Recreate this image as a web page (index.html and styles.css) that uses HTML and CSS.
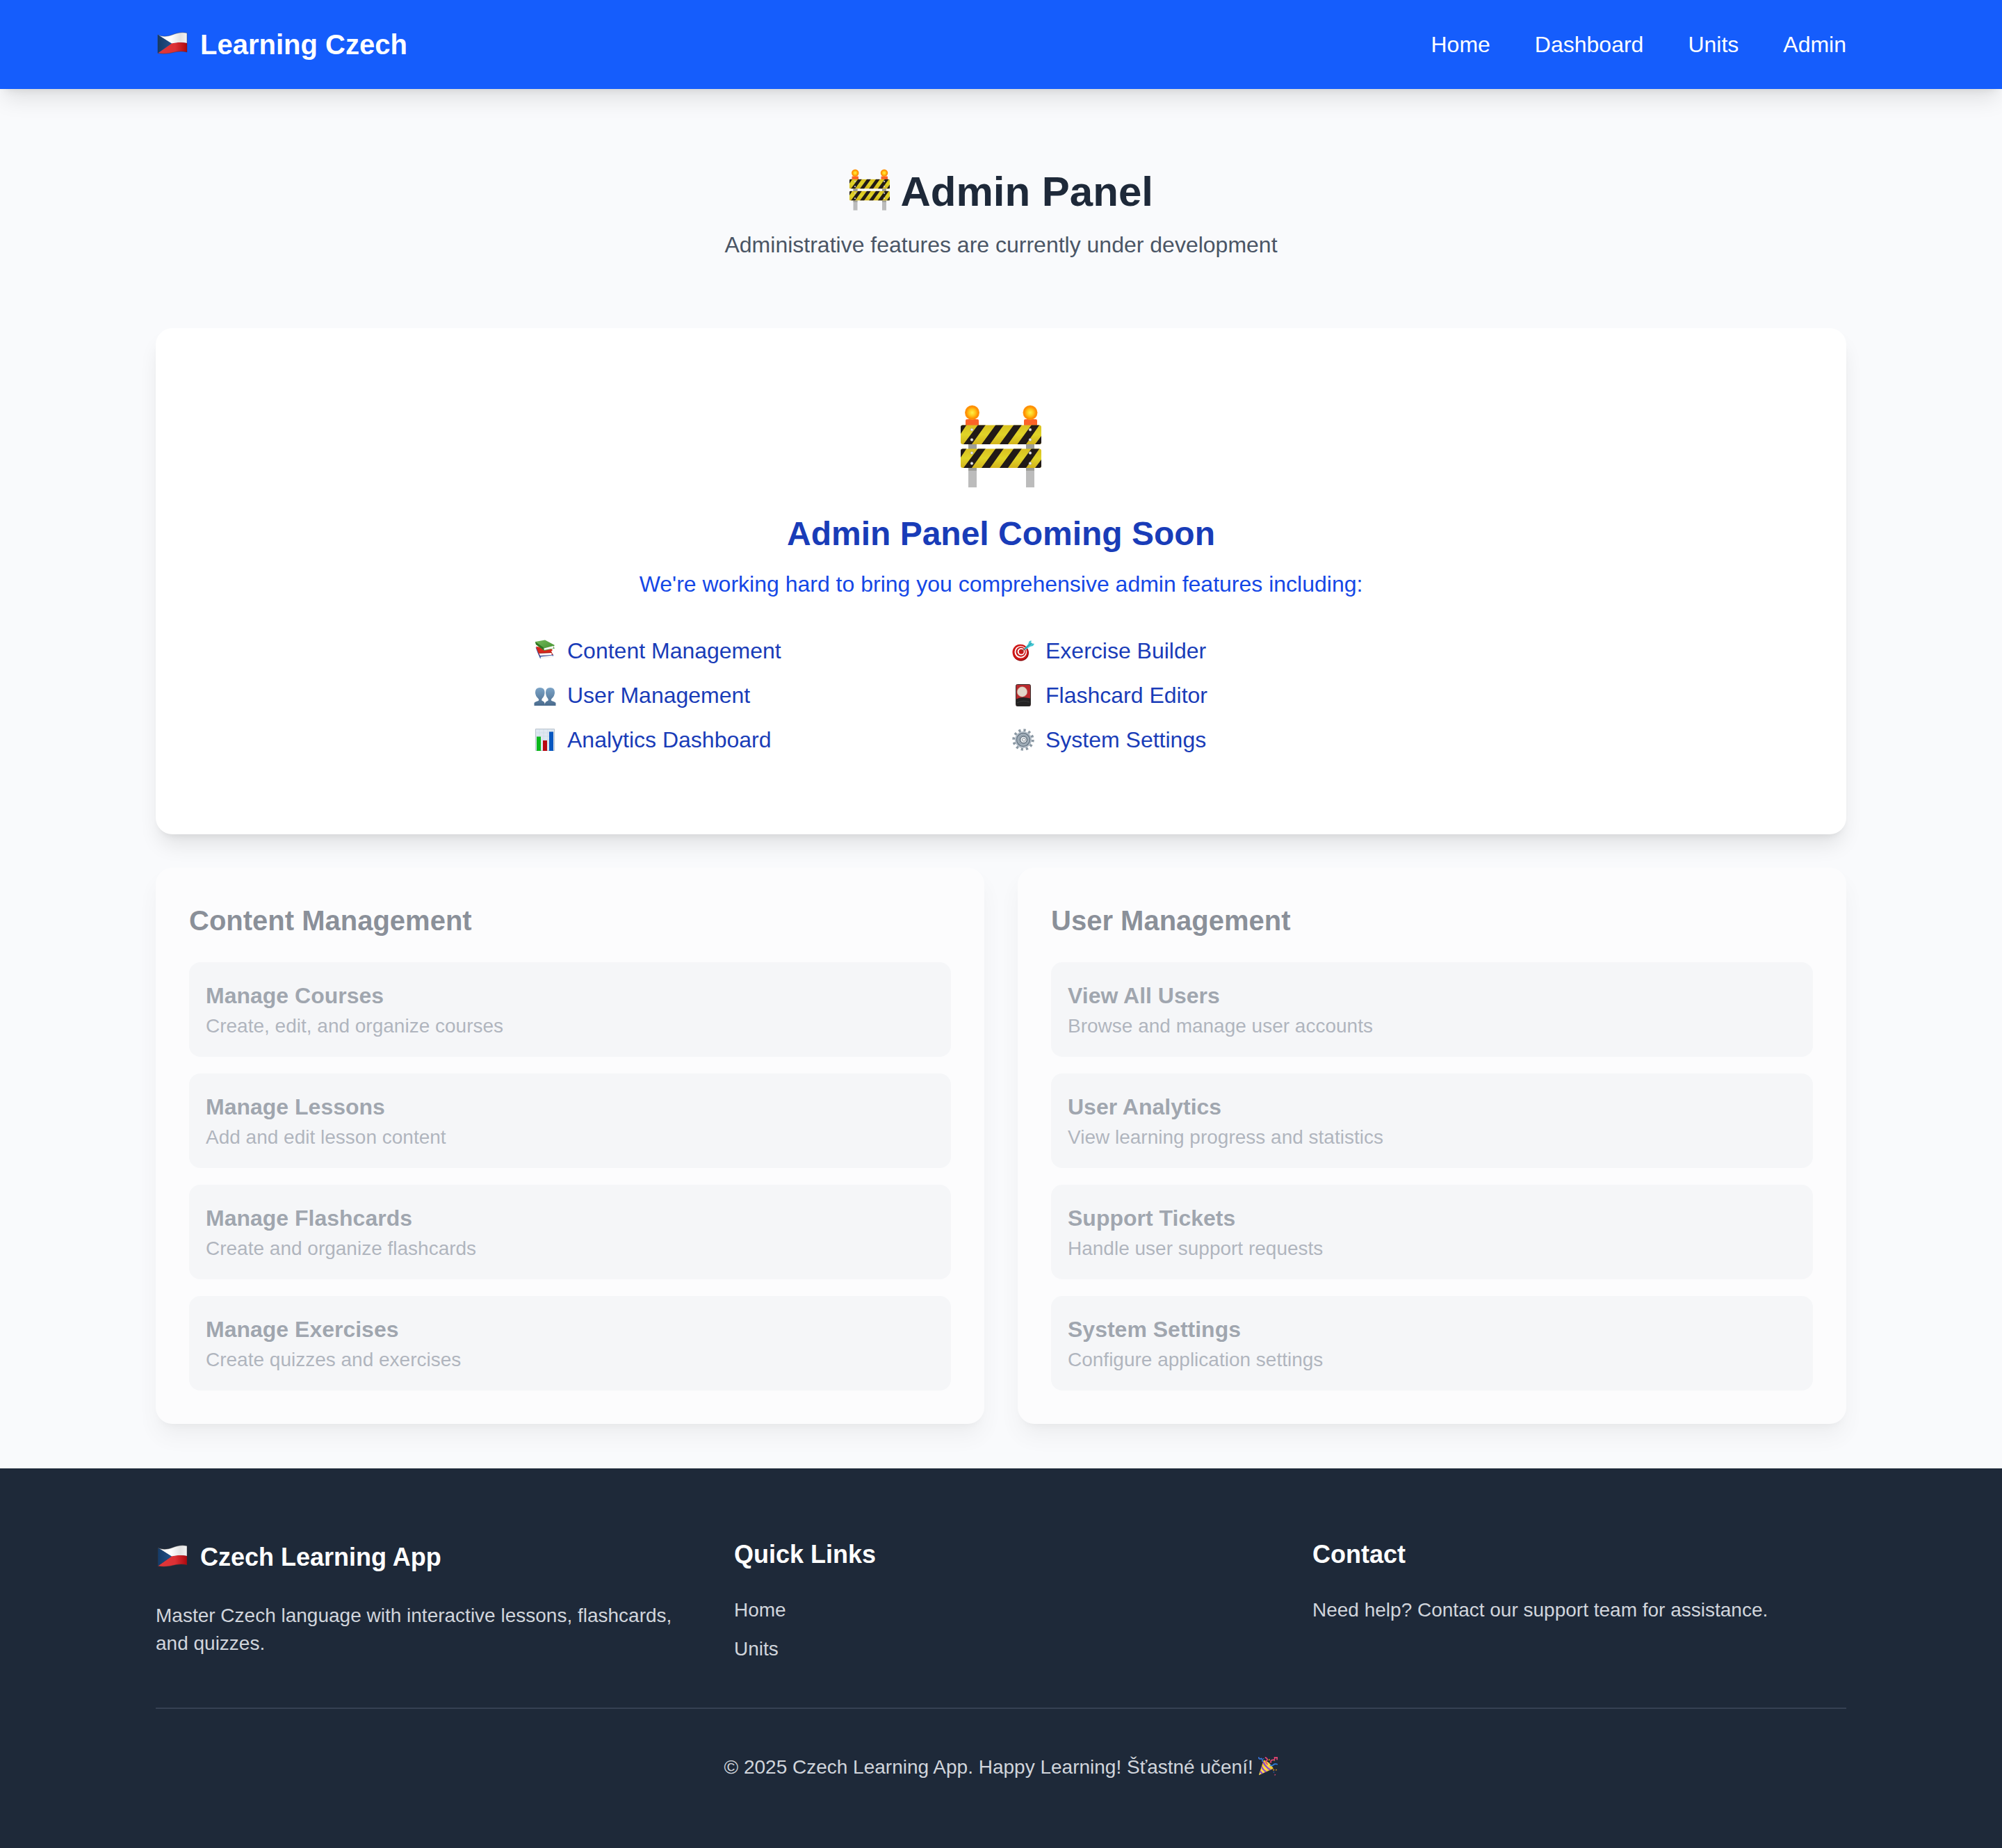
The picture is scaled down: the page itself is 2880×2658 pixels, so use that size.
FILE: index.html
```html
<!DOCTYPE html>
<html lang="en">
<head>
<meta charset="utf-8">
<meta name="viewport" content="width=device-width, initial-scale=1">
<title>Admin Panel - Learning Czech</title>
<link rel="stylesheet" href="styles.css">
</head>
<body>
<svg class="defs" aria-hidden="true">
  <defs>
    <linearGradient id="flag-white" x1="0" x2="1" y1="0" y2="0"><stop offset="0" stop-color="#eee"/><stop offset=".45" stop-color="#fff"/><stop offset=".78" stop-color="#e2e2e2"/><stop offset="1" stop-color="#f4f4f4"/></linearGradient>
    <linearGradient id="flag-red" x1="0" x2="1" y1="0" y2="0"><stop offset="0" stop-color="#e0393a"/><stop offset=".6" stop-color="#dc3035"/><stop offset="1" stop-color="#ad080e"/></linearGradient>
    <linearGradient id="flag-blue" x1="0" x2="1" y1="0" y2="0"><stop offset="0" stop-color="#143a66"/><stop offset="1" stop-color="#235089"/></linearGradient>
    <radialGradient id="lamp"><stop offset="0" stop-color="#fff04a"/><stop offset=".45" stop-color="#ffc61a"/><stop offset=".85" stop-color="#ff8a00"/><stop offset="1" stop-color="#ff9d1c"/></radialGradient>
    <linearGradient id="plank" x1="0" x2="0" y1="0" y2="1"><stop offset="0" stop-color="#d9bf1f"/><stop offset=".5" stop-color="#e0d428"/><stop offset="1" stop-color="#d3b41c"/></linearGradient>
    <linearGradient id="people" x1="0" x2="0" y1="0" y2="1"><stop offset="0" stop-color="#7ba3c6"/><stop offset="1" stop-color="#4a6b8d"/></linearGradient>
    <linearGradient id="green-book" x1="0" x2="1" y1="0" y2="1"><stop offset="0" stop-color="#74b85a"/><stop offset="1" stop-color="#3f8f2c"/></linearGradient>
    <linearGradient id="cone" x1="0" x2="1" y1="0" y2="1"><stop offset="0" stop-color="#e9a90c"/><stop offset=".5" stop-color="#ffe04d"/><stop offset="1" stop-color="#e0a010"/></linearGradient>
    <clipPath id="plank-top"><rect x="2" y="27.500" width="116" height="27.500" rx="3"/></clipPath>
    <clipPath id="plank-low"><rect x="2" y="61.500" width="116" height="27.500" rx="3"/></clipPath>
    <clipPath id="cone-clip"><path d="M1 30 9 5q9 2 16 14Z"/></clipPath>
    <symbol id="flag" viewBox="0 0 48 48">
      <path d="M3 10C9 13 16 13 24 10S38 6 45 7.500V22C38 21 31 21 23 23L3 10Z" fill="url(#flag-white)"/>
      <path d="M3 36.500C12 38 19 37 25 35.500S38 33 45 35V22C37 20.500 30 21 22.500 22.500Z" fill="url(#flag-red)"/>
      <path d="M3 10 23 22.500 3 36.500Z" fill="url(#flag-blue)"/>
      <path d="M3 10C9 13 16 13 24 10S38 6 45 7.500V35C38 33 32 34 25 35.500S12 38 3 36.500Z" fill="none" stroke="#333" stroke-opacity=".4"/>
    </symbol>
    <symbol id="barrier" viewBox="0 0 120 120">
      <path d="M13 50h12v67H13zM96 50h12v67H96z" fill="#bcbcbc"/>
      <path d="M13 55h12v7H13zM96 55h12v7H96zM13 89h12v4H13zM96 89h12v4H96z" fill="#9d9d96"/>
      <rect x="9" y="19" width="19" height="10" rx="2" fill="#fb6328"/>
      <rect x="93" y="19" width="19" height="10" rx="2" fill="#fb6328"/>
      <circle cx="18.500" cy="9.500" r="10.500" fill="url(#lamp)"/>
      <circle cx="102" cy="9.500" r="10.500" fill="url(#lamp)"/>
      <g clip-path="url(#plank-top)">
        <path d="M2 27h116v28H2z" fill="url(#plank)"/>
        <path d="M2 27h8.500L2 40zM27 27h11L18 55H6zM52.500 27h11.500L44 55H32zM78.500 27h11.500L70 55H58zM104 27h11.500L96 55H83.500zM118 43v12h-9z" fill="#211a17"/>
      </g>
      <g clip-path="url(#plank-low)">
        <path d="M2 61h116v28H2z" fill="url(#plank)"/>
        <path d="M2 61h8.500L2 74zM27 61h11L18 89H6zM52.500 61h11.500L44 89H32zM78.500 61h11.500L70 89H58zM104 61h11.500L96 89H83.500zM118 77v12h-9z" fill="#211a17"/>
      </g>
      <g fill="#eee" stroke="#888" stroke-width=".5"><circle cx="18" cy="34" r="2"/><circle cx="18" cy="48.500" r="2"/><circle cx="102" cy="34" r="2"/><circle cx="102" cy="48.500" r="2"/><circle cx="18" cy="67.500" r="2"/><circle cx="18" cy="82.500" r="2"/><circle cx="102" cy="67.500" r="2"/><circle cx="102" cy="82.500" r="2"/></g>
    </symbol>
    <symbol id="books" viewBox="0 0 32 32">
      <path d="M2.500 11l3 8 3.500 8 19-3.500v-2L10 15Z" fill="#274ba0"/>
      <path d="M9.500 24.500l17.500-2v2.500l-17 2.500Z" fill="#f2f2f2"/>
      <path d="M3 10l20 2 4 3-2 2 2.500 4.500-19 1.500-3-6Z" fill="#d8281c"/>
      <path d="M7.500 19.500l18-.5v3L9 23Z" fill="#fff"/>
      <path d="M8 19.500l18-1" stroke="#8f1710" stroke-width=".8"/>
      <path d="M2 3 16 .5 30 8l-2 2 2 2.500-15 3.500L3 7Z" fill="url(#green-book)"/>
      <path d="M14.500 12.500 28 9v3.500L15 15Z" fill="#f7f7f3"/>
      <path d="M2 3l12 8.500V15L3 7Z" fill="#2f7422"/>
    </symbol>
    <symbol id="users" viewBox="0 0 32 32">
      <g fill="url(#people)">
        <path d="M.5 31v-4q1-1.500 6-3 1.500-1 0-3Q2 17 2 12q0-7 6.800-7t6.800 7q0 5-3.600 8.500-1.500 2.500 0 3.500 4 1 4 7Z"/>
        <path d="M31.500 31v-4q-1-1.500-6-3-1.500-1 0-3Q30 17 30 12q0-7-6.500-7T17 12q0 5 3 8.500 1.500 2.500 0 3.500-4 1-5 7Z"/>
      </g>
    </symbol>
    <symbol id="chart" viewBox="0 0 32 32">
      <path d="M2.500.5h27v31h-27z" fill="#dfe8f1" stroke="#b9c3cc"/>
      <path d="M3 6h26M3 11h26M3 16h26M3 21h26M8 1v30M14 1v30M20 1v30M26 1v30" stroke="#cbd8e5" stroke-width=".6"/>
      <path d="M4 11.500h6V32H4z" fill="#0bb81b"/>
      <path d="M13 17h6v15h-6z" fill="#b80710"/>
      <path d="M22 4.500h6V32h-6z" fill="#0757c0"/>
    </symbol>
    <symbol id="target" viewBox="0 0 32 32">
      <ellipse cx="12.500" cy="19" rx="11.500" ry="11.800" fill="#8f0d10"/>
      <circle cx="11.800" cy="18" r="11.300" fill="#cf1717"/>
      <circle cx="12.300" cy="17.700" r="8.800" fill="#fff"/>
      <circle cx="12.600" cy="17.500" r="7.200" fill="#c91616"/>
      <circle cx="13" cy="17.300" r="5.300" fill="#fff"/>
      <circle cx="13.200" cy="17.200" r="3.500" fill="#c91616"/>
      <path d="M13.500 17 21 11" stroke="#843" stroke-width="1.200"/>
      <path d="M17 13.500l6-7 1.500-4 3-1.500v4L32 6l-2 3-4 1-7 4.500Z" fill="#43c6d3"/>
      <path d="M18 13.500 28 5" stroke="#1b8793" stroke-width="1"/>
    </symbol>
    <symbol id="card" viewBox="0 0 32 32">
      <rect x="5.500" y=".5" width="21" height="31" rx="2" fill="#b92a2e" stroke="#363230"/>
      <path d="M6 21.500q7-4.500 20-1V30q0 1.500-1.500 1.500h-17Q6 31.500 6 30Z" fill="#242323"/>
      <path d="M7 27q9-5 18-1" stroke="#3b3b3b" fill="none"/>
      <circle cx="14.500" cy="11" r="7.200" fill="#e3d7c9" stroke="#c7aa98" stroke-width=".5"/>
    </symbol>
    <symbol id="gear" viewBox="0 0 32 32">
      <circle cx="16" cy="16" r="13.700" fill="none" stroke="#8b98a3" stroke-width="4" stroke-dasharray="3.200 3.973"/>
      <circle cx="16" cy="16" r="12" fill="#b4bec8"/>
      <circle cx="16" cy="16" r="10.200" fill="#71808e"/>
      <circle cx="16" cy="16" r="8" fill="#94a2ae" stroke="#b5c0c9" stroke-width="1"/>
      <circle cx="16.500" cy="16" r="4.800" fill="#e6ebef" stroke="#4d5a66" stroke-width="1"/>
      <circle cx="17" cy="16" r="2.200" fill="#fff" stroke="#66717b" stroke-width=".8"/>
    </symbol>
    <symbol id="party" viewBox="0 0 32 32">
      <path d="M1 30 9 5q9 2 16 14Z" fill="url(#cone)"/>
      <g clip-path="url(#cone-clip)" fill="none" stroke="#8d49c6" stroke-width="2.600"><path d="M8 8q3 8 13 14M5 15q3 7 10 11M3 23q2 4 6 6"/></g>
      <g fill="none" stroke-width="2" stroke-linecap="round">
        <path d="M1 1q0 3 3 2t3 4" stroke="#3a77dc"/>
        <path d="M12 1q5 3 2 5t1 6M21 9q-1-4 3-4t3-4h4v3" stroke="#e24472"/>
        <path d="M20 14q3 1 5-1t6-1" stroke="#2f7fe0"/>
      </g>
      <path d="M16 5l3-2v3zM24 20l3 1-2 2zM29 20l2 1-2 2zM26 5l2 1-2 1z" fill="#f2a01e"/>
      <path d="M27 28l2 1-2 2zM19 8l2 1-2 1z" fill="#e24472"/>
      <path d="M25 24l2 1-2 1zM8 2l2 1-2 1z" fill="#3a77dc"/>
    </symbol>
  </defs>
</svg>

<header class="site-header">
  <div class="container header-row">
    <a class="brand" href="#"><svg class="icon-md" aria-hidden="true"><use href="#flag"/></svg><span class="brand-name">Learning Czech</span></a>
    <nav class="main-nav" aria-label="Main">
      <a href="#">Home</a>
      <a href="#">Dashboard</a>
      <a href="#">Units</a>
      <a href="#">Admin</a>
    </nav>
  </div>
</header>

<main class="container page">
  <div class="intro">
    <h1><svg class="icon-title" aria-hidden="true"><use href="#barrier"/></svg> Admin Panel</h1>
    <p>Administrative features are currently under development</p>
  </div>

  <section class="card soon">
    <svg class="icon-hero" aria-hidden="true"><use href="#barrier"/></svg>
    <h2>Admin Panel Coming Soon</h2>
    <p>We're working hard to bring you comprehensive admin features including:</p>
    <ul class="features">
      <li><svg class="icon-sm" aria-hidden="true"><use href="#books"/></svg>Content Management</li>
      <li><svg class="icon-sm" aria-hidden="true"><use href="#target"/></svg>Exercise Builder</li>
      <li><svg class="icon-sm" aria-hidden="true"><use href="#users"/></svg>User Management</li>
      <li><svg class="icon-sm" aria-hidden="true"><use href="#card"/></svg>Flashcard Editor</li>
      <li><svg class="icon-sm" aria-hidden="true"><use href="#chart"/></svg>Analytics Dashboard</li>
      <li><svg class="icon-sm" aria-hidden="true"><use href="#gear"/></svg>System Settings</li>
    </ul>
  </section>

  <div class="panels">
    <section class="card panel">
      <h2>Content Management</h2>
      <div class="options">
        <div class="option"><h3>Manage Courses</h3><p>Create, edit, and organize courses</p></div>
        <div class="option"><h3>Manage Lessons</h3><p>Add and edit lesson content</p></div>
        <div class="option"><h3>Manage Flashcards</h3><p>Create and organize flashcards</p></div>
        <div class="option"><h3>Manage Exercises</h3><p>Create quizzes and exercises</p></div>
      </div>
    </section>
    <section class="card panel">
      <h2>User Management</h2>
      <div class="options">
        <div class="option"><h3>View All Users</h3><p>Browse and manage user accounts</p></div>
        <div class="option"><h3>User Analytics</h3><p>View learning progress and statistics</p></div>
        <div class="option"><h3>Support Tickets</h3><p>Handle user support requests</p></div>
        <div class="option"><h3>System Settings</h3><p>Configure application settings</p></div>
      </div>
    </section>
  </div>
</main>

<footer class="site-footer">
  <div class="container">
    <div class="footer-columns">
      <div class="footer-column">
        <div class="footer-brand"><svg class="icon-md" aria-hidden="true"><use href="#flag"/></svg><h3>Czech Learning App</h3></div>
        <p>Master Czech language with interactive lessons, flashcards, and quizzes.</p>
      </div>
      <div class="footer-column">
        <h3>Quick Links</h3>
        <ul class="footer-links">
          <li><a href="#">Home</a></li>
          <li><a href="#">Units</a></li>
        </ul>
      </div>
      <div class="footer-column">
        <h3>Contact</h3>
        <p>Need help? Contact our support team for assistance.</p>
      </div>
    </div>
    <p class="copyright">© 2025 Czech Learning App. Happy Learning! Šťastné učení! <svg class="icon-text" aria-hidden="true"><use href="#party"/></svg></p>
  </div>
</footer>
</body>
</html>
```
FILE: styles.css
```css
*,
*::before,
*::after {
  box-sizing: border-box;
}

body,
h1,
h2,
h3,
p,
ul {
  margin: 0;
  padding: 0;
}

body {
  background: #f9fafc;
  color: #1e2939;
  font-family: "Liberation Sans", Arial, Helvetica, sans-serif;
  font-size: 32px;
  line-height: 48px;
}

ul {
  list-style: none;
}

a {
  color: inherit;
  text-decoration: none;
}

svg {
  display: block;
  flex: none;
}

.defs {
  position: absolute;
  width: 0;
  height: 0;
}

.container {
  width: 100%;
  max-width: 2560px;
  margin: 0 auto;
  padding: 0 64px;
}

.icon-sm {
  width: 32px;
  height: 32px;
}

.icon-md {
  width: 48px;
  height: 48px;
}

.icon-title {
  display: inline-block;
  width: 60px;
  height: 60px;
  overflow: visible;
  vertical-align: -8px;
}

.icon-hero {
  width: 120px;
  height: 120px;
  margin: 0 auto 32px;
  overflow: visible;
}

.icon-title use,
.icon-hero use {
  overflow: visible;
}

#barrier {
  overflow: visible;
}

.icon-text {
  display: inline-block;
  width: 28px;
  height: 28px;
  vertical-align: -4px;
}

/* Header */

.site-header {
  background: #155dfc;
  color: #fff;
  box-shadow: 0 20px 30px -6px rgb(0 0 0 / 10%), 0 8px 12px -8px rgb(0 0 0 / 10%);
}

.header-row {
  display: flex;
  align-items: center;
  justify-content: space-between;
  min-height: 128px;
}

.brand,
.footer-brand {
  display: flex;
  align-items: center;
  gap: 16px;
}

.brand-name {
  font-size: 40px;
  font-weight: 700;
  line-height: 56px;
}

.main-nav {
  display: flex;
  gap: 64px;
}

/* Page */

.page {
  padding-top: 112px;
  padding-bottom: 64px;
}

.intro {
  margin-bottom: 96px;
  text-align: center;
}

.intro h1 {
  margin-bottom: 16px;
  font-size: 60px;
  line-height: 72px;
}

.intro p {
  color: #4a5565;
}

.card {
  background: #fff;
  border-radius: 24px;
  box-shadow: 0 20px 30px -6px rgb(0 0 0 / 10%), 0 8px 12px -8px rgb(0 0 0 / 10%);
}

.soon {
  padding: 112px 48px;
  color: #193cb8;
  text-align: center;
}

.soon h2 {
  margin-bottom: 16px;
  font-size: 48px;
  line-height: 64px;
}

.soon p {
  margin-bottom: 48px;
  color: #1447e6;
}

.features {
  display: grid;
  grid-template-columns: 1fr 1fr;
  gap: 16px 32px;
  max-width: 1344px;
  margin: 0 auto;
}

.features li {
  display: flex;
  align-items: center;
  gap: 16px;
}

.panels {
  display: grid;
  grid-template-columns: 1fr 1fr;
  gap: 48px;
  margin-top: 48px;
}

.panel {
  padding: 48px;
  opacity: 0.5;
}

.panel h2 {
  margin-bottom: 32px;
  font-size: 40px;
  line-height: 56px;
}

.options {
  display: grid;
  gap: 24px;
}

.option {
  padding: 24px;
  border-radius: 16px;
  background: #f3f4f6;
}

.option h3 {
  color: #4a5565;
  font-size: 32px;
  line-height: 48px;
}

.option p {
  color: #6a7282;
  font-size: 28px;
  line-height: 40px;
}

/* Footer */

.site-footer {
  padding: 96px 0;
  background: #1e2939;
  color: #d1d5dc;
  font-size: 28px;
  line-height: 40px;
}

.footer-columns {
  display: grid;
  grid-template-columns: repeat(3, 1fr);
  gap: 64px;
}

.footer-column h3 {
  margin-bottom: 32px;
  color: #fff;
  font-size: 36px;
  line-height: 56px;
}

.footer-column .footer-brand {
  min-height: 64px;
  margin-bottom: 32px;
}

.footer-column .footer-brand h3 {
  margin-bottom: 0;
}

.footer-links {
  display: grid;
  gap: 16px;
}

.footer-links a {
  display: block;
}

.copyright {
  margin-top: 64px;
  padding-top: 64px;
  border-top: 2px solid #364153;
  text-align: center;
}
```
